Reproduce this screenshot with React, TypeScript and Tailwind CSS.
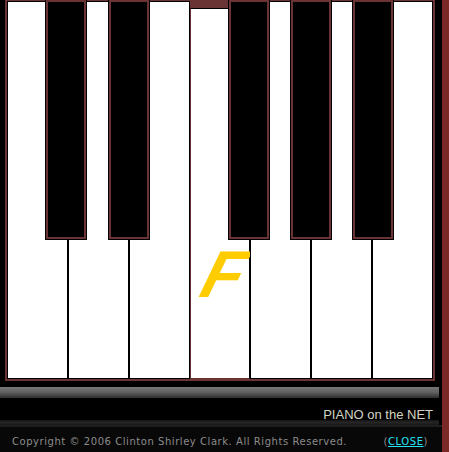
const BLACK_KEYS = [39, 102, 222, 284, 346];
const PRESSED = 3;

function WhiteKey({ pressed, note }: { pressed: boolean; note?: string }) {
  return (
    <div
      className={
        pressed
          ? "relative flex-1 mt-[7px] border border-l-[#6b3434] border-r-black border-t-black border-b-[#6b3434] bg-white"
          : "relative flex-1 border border-black bg-white"
      }
    >
      {pressed && note && (
        <span
          className="absolute left-[13px] top-[232px] -skew-x-[16deg] text-[66px] leading-none font-semibold italic text-[#ffcc00] select-none"
          style={{ fontFamily: '"Liberation Sans", Arial, sans-serif' }}
        >
          {note}
        </span>
      )}
    </div>
  );
}

export default function App() {
  return (
    <div className="flex w-[449px] h-[452px] bg-black overflow-hidden">
      <div className="flex flex-col w-[442px]">
        <div className="pl-[5px] h-[381px]">
          <div className="relative flex w-[430px] h-[381px] border-x-2 border-t border-b-2 border-[#6b3434] bg-[#6b3434]">
            {Array.from({ length: 7 }).map((_, i) => (
              <WhiteKey key={i} pressed={i === PRESSED} note="F" />
            ))}
            {BLACK_KEYS.map((left) => (
              <div
                key={left}
                className="absolute top-[-1px] w-[40px] h-[239px] border-2 border-[#6b3434] bg-black outline outline-1 outline-black"
                style={{ left }}
              />
            ))}
          </div>
        </div>
        <div className="h-[6px]" />
        <div className="h-[11px] w-[439px] bg-gradient-to-b from-[#777] via-[#5e5e5e] to-[#2e2e2e]" />
        <div
          className="relative z-10 h-[22px] flex items-start justify-end pr-[9px] pt-[10px] text-[13px] leading-[13px] text-[#d4d4c4]"
          style={{ fontFamily: '"Liberation Sans", Arial, sans-serif' }}
        >
          PIANO on the NET
        </div>
        <div className="h-[5px] w-[439px] bg-gradient-to-b from-[#141414] via-[#262626] to-[#181818]" />
        <div className="h-[2px] w-[442px] bg-[#1e1e1e]" />
        <div
          className="flex-1 flex items-start justify-between pl-[12px] pr-[14px] pt-[10px] bg-[#080808] text-[10px] leading-none tracking-[0.55px] text-[#8c8c8c]"
          style={{ fontFamily: '"DejaVu Sans", Verdana, sans-serif' }}
        >
          <span>Copyright © 2006 Clinton Shirley Clark. All Rights Reserved.</span>
          <span>
            (<span className="text-[#22e4f4] underline">CLOSE</span>)
          </span>
        </div>
      </div>
      <div className="w-[7px] h-full bg-[#7a2828]" />
    </div>
  );
}
